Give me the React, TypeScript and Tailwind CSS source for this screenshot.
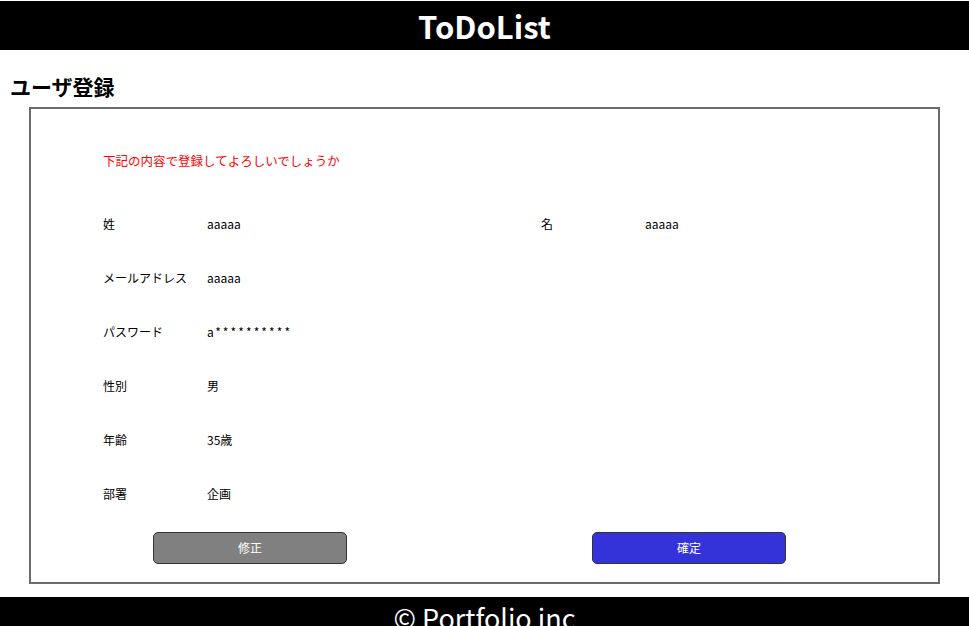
import React from 'react';

const rows: { label: string; value: string; label2?: string; value2?: string }[] = [
  { label: '姓', value: 'aaaaa', label2: '名', value2: 'aaaaa' },
  { label: 'メールアドレス', value: 'aaaaa' },
  { label: 'パスワード', value: 'a**********' },
  { label: '性別', value: '男' },
  { label: '年齢', value: '35歳' },
  { label: '部署', value: '企画' },
];

const App: React.FC = () => {
  return (
    <div className="min-h-screen bg-white font-['Noto_Sans_CJK_JP',sans-serif] text-black">
      {/* Header */}
      <header className="mt-px flex h-[49px] items-center justify-center bg-black">
        <h1 className="text-[31px] font-bold leading-none text-white">ToDoList</h1>
      </header>

      {/* Title */}
      <h2 className="ml-[10px] mt-[22px] text-[21px] font-bold leading-[28px]">ユーザ登録</h2>

      {/* Confirm box */}
      <section className="mx-[29px] mt-[7px] border-2 border-[#6b6b6b] pl-[72px] pt-[25px] pb-[18px]">
        <div className="flex h-[54px] items-center text-[12.5px] text-[#ff0000]">
          下記の内容で登録してよろしいでしょうか
        </div>

        <div className="mt-[9px]">
          {rows.map(row => (
            <div key={row.label} className="grid h-[54px] grid-cols-[438px_438px] items-center text-[12px]">
              <div className="flex">
                <span className="w-[104px]">{row.label}</span>
                <span className={row.value.includes('*') ? 'tracking-[2.1px]' : ''}>{row.value}</span>
              </div>
              {row.label2 && (
                <div className="flex">
                  <span className="w-[104px]">{row.label2}</span>
                  <span>{row.value2}</span>
                </div>
              )}
            </div>
          ))}
        </div>

        <div className="mt-[11px] grid grid-cols-[438px_438px]">
          <div className="pl-[50px]">
            <button className="h-[32px] w-[194px] rounded-[5px] border border-[#333] bg-[#808080] text-[12px] text-white">
              修正
            </button>
          </div>
          <div className="pl-[51px]">
            <button className="h-[32px] w-[194px] rounded-[5px] border border-[#333] bg-[#3333d9] text-[12px] text-white">
              確定
            </button>
          </div>
        </div>
      </section>

      {/* Footer */}
      <footer className="mt-[13px] flex h-[50px] items-start justify-center bg-black pt-[4px]">
        <p className="text-[27px] leading-[34px] text-white">© Portfolio inc</p>
      </footer>
    </div>
  );
};

export default App;
